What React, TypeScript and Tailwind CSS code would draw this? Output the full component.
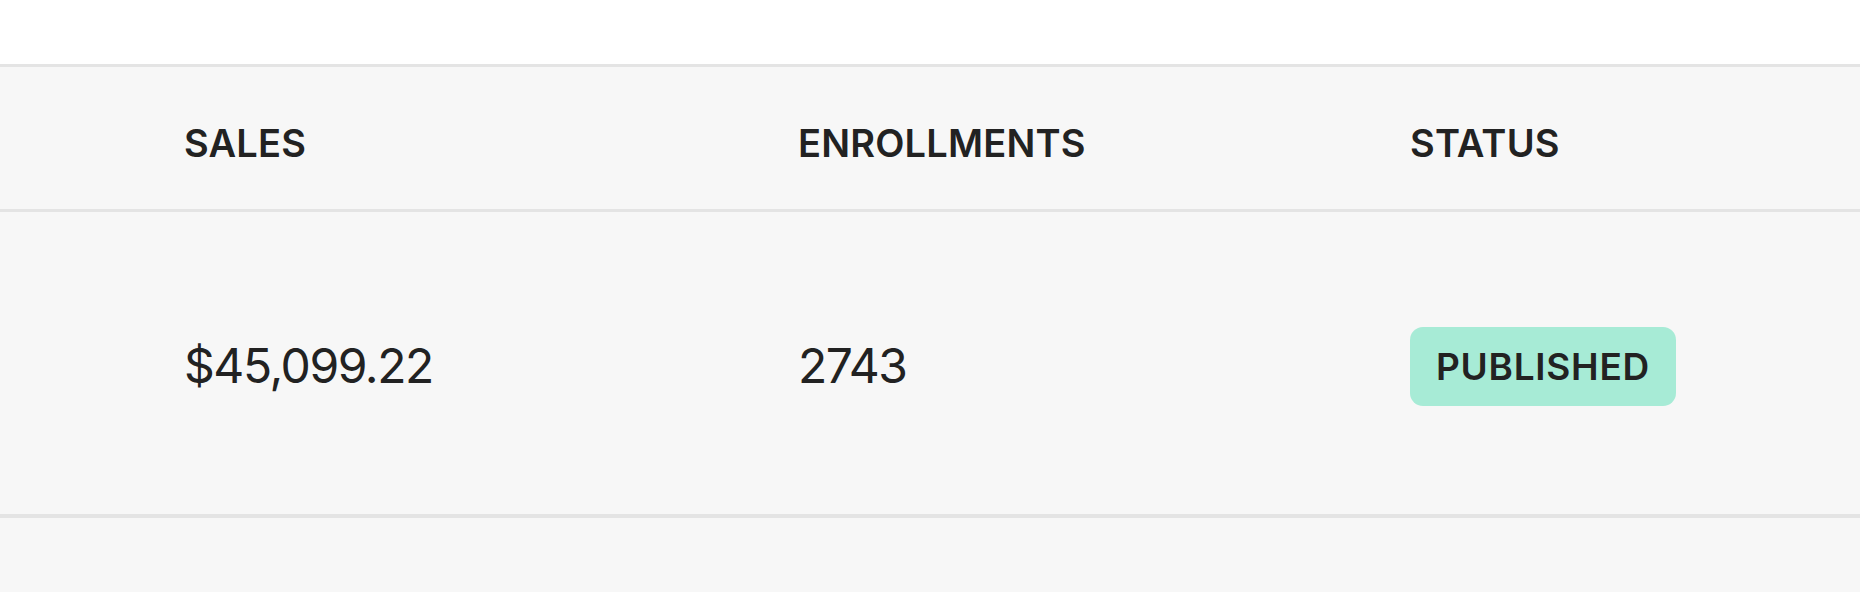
export default function App() {
  const font = { fontFamily: 'Inter, "Noto Sans", sans-serif' };
  return (
    <div className="w-[1860px] h-[592px] bg-[#f7f7f7] overflow-hidden text-[#222222]" style={font}>
      <div className="h-[64px] bg-white" />
      <div className="border-t-[3px] border-b-[3px] border-[#e4e4e4] h-[148px] flex items-center pl-[184px] pt-[10px]">
        <div className="w-[614px] text-[38px] font-semibold tracking-[0.005em] leading-none">SALES</div>
        <div className="w-[612px] text-[38px] font-semibold tracking-[0.005em] leading-none">ENROLLMENTS</div>
        <div className="text-[38px] font-semibold tracking-[0.005em] leading-none">STATUS</div>
      </div>
      <div className="border-b-[4px] border-[#e4e4e4] h-[306px] flex items-center pl-[184px] pt-[6px]">
        <div className="w-[614px] text-[48px] tracking-[-0.03em] leading-none">$45,099.22</div>
        <div className="w-[612px] text-[48px] tracking-[-0.03em] leading-none">2743</div>
        <div>
          <span className="inline-flex items-center justify-center h-[79px] w-[266px] rounded-[13px] bg-[#a7ebd6] text-[37px] font-semibold tracking-[0.02em] leading-none">
            PUBLISHED
          </span>
        </div>
      </div>
    </div>
  );
}
